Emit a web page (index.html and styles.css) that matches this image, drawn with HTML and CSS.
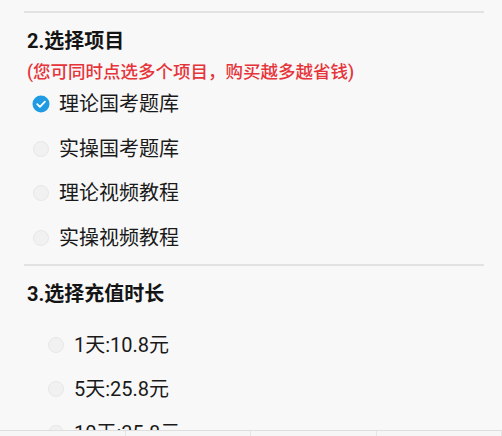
FILE: index.html
```html
<!DOCTYPE html>
<html lang="zh-CN">
<head>
<meta charset="utf-8">
<title>选择项目</title>
<link rel="stylesheet" href="styles.css">
</head>
<body>
<div class="divider first"></div>
<section class="group">
  <h2 class="title t2">2.选择项目</h2>
  <p class="hint">(您可同时点选多个项目，购买越多越省钱)</p>
  <ul class="options items">
    <li class="opt"><span class="box checked"><svg viewBox="0 0 18 18" width="18" height="18"><circle cx="9" cy="9" r="8.5" fill="#1f9ae3"/><path d="M5.2 9.2 L7.9 11.8 L12.9 6.6" fill="none" stroke="#fff" stroke-width="1.8" stroke-linecap="round" stroke-linejoin="round"/></svg></span><span class="label">理论国考题库</span></li>
    <li class="opt"><span class="box"></span><span class="label">实操国考题库</span></li>
    <li class="opt"><span class="box"></span><span class="label">理论视频教程</span></li>
    <li class="opt"><span class="box"></span><span class="label">实操视频教程</span></li>
  </ul>
</section>
<div class="divider second"></div>
<section class="group">
  <h2 class="title t3">3.选择充值时长</h2>
  <ul class="options durations">
    <li class="opt"><span class="box"></span><span class="label">1天:10.8元</span></li>
    <li class="opt"><span class="box"></span><span class="label">5天:25.8元</span></li>
    <li class="opt"><span class="box"></span><span class="label">10天:35.8元</span></li>
  </ul>
</section>
<div class="bottombar">
  <span class="cell"></span><span class="cell"></span><span class="cell"></span><span class="cell"></span>
</div>
</body>
</html>
```
FILE: styles.css
```css
html, body {
  margin: 0;
  padding: 0;
  background: #f8f8f8;
  height: 100%;
  overflow: hidden;
}
body {
  font-family: Roboto, "Noto Sans CJK SC", sans-serif;
  color: #1c1c1c;
}
.divider {
  height: 2px;
  background: #e2e2e2;
  margin-left: 24px;
  margin-right: 18px;
}
.divider.first { margin-top: 11px; }
.divider.second { margin-top: 3.7px; }
.group {
  padding-left: 27px;
}
.title {
  margin: 0;
  font-size: 20px;
  line-height: 28px;
  font-weight: 700;
  color: #141414;
}
.t2 { margin-top: 14px; }
.t3 { margin-top: 14px; }
.hint {
  margin: 5.5px 0 0;
  font-size: 17.5px;
  line-height: 22px;
  color: #e6343a;
  font-weight: 500;
}
.options {
  list-style: none;
  margin: 0;
  padding: 0;
}
.items { margin-top: -0.8px; }
.items .opt { height: 44.67px; padding-left: 6px; }
.durations { margin-top: 15px; }
.durations .opt { height: 44px; padding-left: 21px; }
.opt {
  display: flex;
  align-items: center;
  gap: 10px;
}
.box {
  width: 16px;
  height: 16px;
  border-radius: 50%;
  background: #f1f1f1;
  border: 1px solid #e7e7e7;
  box-sizing: border-box;
  flex: none;
  display: flex;
  align-items: center;
  justify-content: center;
}
.box.checked {
  border: none;
  background: none;
  width: 18px;
  height: 18px;
  margin-left: -1px;
  margin-right: -1px;
}
.box svg { display: block; }
.label {
  font-size: 20px;
  line-height: 28px;
  color: #1a1a1a;
}
.bottombar {
  position: fixed;
  left: 0;
  right: 0;
  bottom: 0;
  height: 5px;
  background: #f6f6f6;
  border-top: 1px solid #dedede;
  display: flex;
}
.cell {
  flex: 1;
  border-right: 1px solid #e6e6e6;
}
```
